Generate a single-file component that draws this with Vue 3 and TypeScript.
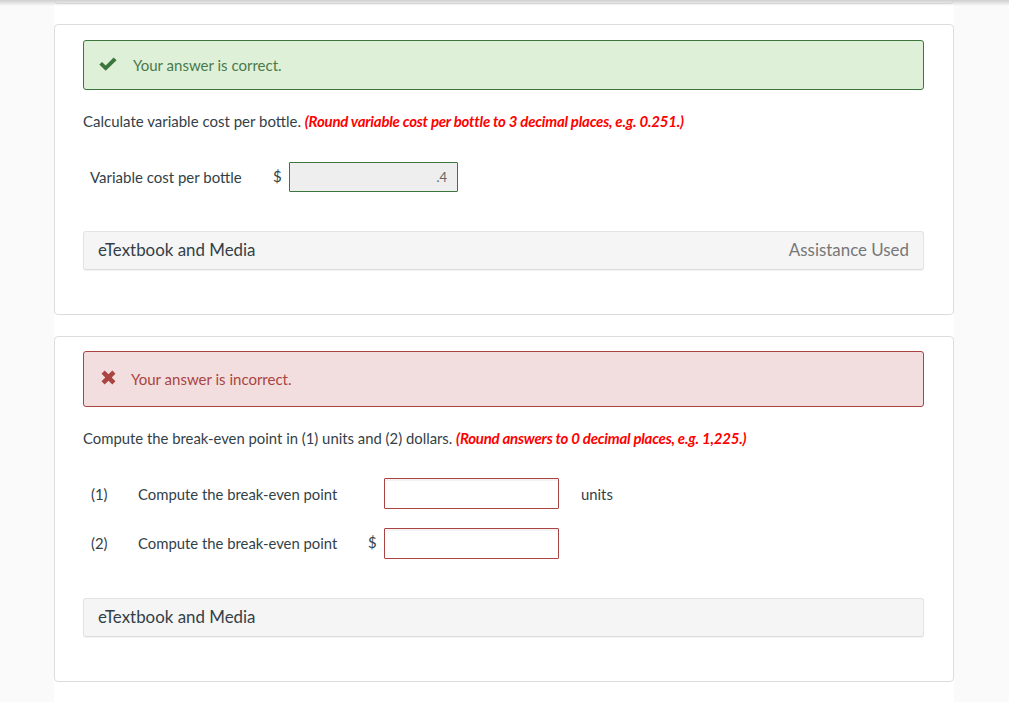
<script setup lang="ts">
const breakEvenRows = [
  { num: '(1)', label: 'Compute the break-even point', prefix: '', suffix: 'units' },
  { num: '(2)', label: 'Compute the break-even point', prefix: '$', suffix: '' },
]
</script>

<template>
  <div class="page">
    <div class="top-shadow" />
    <main class="column">
      <div class="card card-prev" />

      <!-- Correct answer -->
      <section class="card card-first">
        <div class="alert alert-ok">
          <svg class="alert-icon icon-check" viewBox="0 0 18 14" width="18" height="14">
            <path d="M0.3 7.6 L3 4.9 L6.7 8.5 L14.6 0.6 L17.6 3.2 L6.7 13.8 Z" fill="#3c763d" />
          </svg>
          <span>Your answer is correct.</span>
        </div>
        <p class="question">
          Calculate variable cost per bottle.
          <em class="hint">(Round variable cost per bottle to 3 decimal places, e.g. 0.251.)</em>
        </p>
        <div class="answer-row">
          <span class="answer-label">Variable cost per bottle</span>
          <span class="dollar">$</span>
          <div class="field field-ok">.4</div>
        </div>
        <div class="media-bar">
          <span>eTextbook and Media</span>
          <span class="assist">Assistance Used</span>
        </div>
      </section>

      <!-- Incorrect answer -->
      <section class="card card-second">
        <div class="alert alert-bad">
          <svg class="alert-icon icon-cross" viewBox="0 0 14 14" width="15" height="15">
            <path d="M3.4 0.5 L7 4 L10.6 0.5 L13.5 3.4 L10 7 L13.5 10.6 L10.6 13.5 L7 10 L3.4 13.5 L0.5 10.6 L4 7 L0.5 3.4 Z" fill="#a94442" />
          </svg>
          <span>Your answer is incorrect.</span>
        </div>
        <p class="question">
          Compute the break-even point in (1) units and (2) dollars.
          <em class="hint">(Round answers to 0 decimal places, e.g. 1,225.)</em>
        </p>
        <div class="rows">
          <div v-for="row in breakEvenRows" :key="row.num" class="be-row">
            <span class="be-num">{{ row.num }}</span>
            <span class="be-label">{{ row.label }}</span>
            <span class="be-prefix">{{ row.prefix }}</span>
            <input class="field field-bad" type="text" />
            <span class="be-suffix">{{ row.suffix }}</span>
          </div>
        </div>
        <div class="media-bar">
          <span>eTextbook and Media</span>
        </div>
      </section>
    </main>
  </div>
</template>

<style>
html,
body {
  margin: 0;
  background: #fafafa;
}
</style>

<style scoped>
.page {
  position: relative;
  height: 702px;
  overflow: hidden;
  background: #fafafa;
  font-family: Lato, "Open Sans", sans-serif;
  font-size: 14.85px;
  color: #333f48;
}

.top-shadow {
  position: absolute;
  top: 0;
  left: 0;
  right: 0;
  height: 6px;
  background: linear-gradient(#cfcfcf, rgba(235, 235, 235, 0));
  z-index: 2;
}

.column {
  width: 900px;
  height: 100%;
  margin-left: 54px;
  background: #fff;
}

.card {
  box-sizing: border-box;
  background: #fff;
  border: 1px solid #dcdcdc;
  border-radius: 4px;
  padding: 15px 29px 0 28px;
}

.card-prev {
  height: 4px;
  padding: 0;
  border-top: none;
  border-radius: 0 0 4px 4px;
  margin-bottom: 20px;
}

.card-first {
  height: 291px;
  margin-bottom: 21px;
  font-size: 15px;
}

.card-second {
  height: 346px;
  padding-top: 14px;
}

.alert {
  box-sizing: border-box;
  display: flex;
  align-items: center;
  border-radius: 3px;
  border: 1px solid;
  font-size: 15px;
}

.alert-ok {
  height: 50px;
  background: #dff0d8;
  border-color: #3c763d;
  color: #4a7a4b;
  padding-left: 15px;
}

.alert-bad {
  height: 56px;
  background: #f2dede;
  border-color: #a94442;
  color: #a94442;
  padding-left: 17px;
}

.alert-icon {
  flex-shrink: 0;
}

.icon-check {
  margin: -3px 16px 0 0;
}

.icon-cross {
  margin: -3px 15px 0 0;
}

.question {
  margin: 21px 0 0;
  line-height: 20px;
}

.hint {
  color: #f00;
  font-size: 15px;
  font-weight: 700;
  letter-spacing: -0.23px;
}

.answer-row {
  display: flex;
  align-items: center;
  margin-top: 31px;
  padding-left: 7px;
}

.answer-label {
  width: 183px;
}

.dollar {
  width: 16px;
  margin-top: -3px;
}

.field {
  box-sizing: border-box;
  width: 169px;
  height: 30px;
  border-radius: 1px;
  border: 1px solid;
}

.field-ok {
  background: #eee;
  border-color: #3c763d;
  color: #666;
  font-size: 13px;
  line-height: 28px;
  text-align: right;
  padding-right: 10px;
}

.field-bad {
  display: block;
  width: 175px;
  height: 31px;
  padding: 0;
  background: #fff;
  border-color: #a94442;
  outline: none;
  box-shadow: inset 0 2px 0 #f3f3f3;
}

.media-bar {
  box-sizing: border-box;
  display: flex;
  justify-content: space-between;
  align-items: center;
  height: 39px;
  margin-top: 39px;
  padding: 0 14px 2px;
  background: #f5f5f5;
  border: 1px solid #e3e3e3;
  border-bottom-color: #dcdcdc;
  border-radius: 3px;
  box-shadow: 0 1px 1px rgba(0, 0, 0, 0.05);
  font-size: 16.9px;
}

.assist {
  color: #777;
}

.rows {
  display: flex;
  flex-direction: column;
  gap: 19px;
  margin-top: 30px;
}

.be-row {
  display: flex;
  align-items: center;
  padding-left: 7px;
}

.be-row:nth-child(2) .be-num,
.be-row:nth-child(2) .be-label {
  padding-bottom: 2px;
}

.be-num {
  width: 48px;
  padding-left: 1px;
  box-sizing: border-box;
}

.be-label {
  width: 230px;
}

.be-prefix {
  width: 16px;
  margin-top: -3px;
}

.be-suffix {
  margin-left: 22px;
}
</style>
